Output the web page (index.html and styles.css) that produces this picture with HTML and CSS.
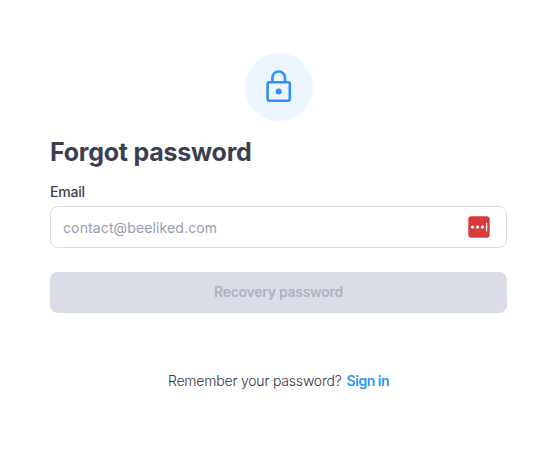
FILE: index.html
```html
<!DOCTYPE html>
<html lang="en">
  <head>
    <title>Forgot password</title>
    <meta charset="utf-8"/>
    <meta name="viewport" content="width=device-width, initial-scale=1.0"/>
    <link rel="stylesheet" href="styles.css">
  </head>
  <body>
    <main class="recovery">
      <div class="lock-badge">
        <svg width="68" height="68" viewBox="0 0 68 68" fill="none">
          <rect x="22.6" y="29.2" width="22.2" height="18.6" rx="2" stroke="#2b93f8" stroke-width="2.6"/>
          <path d="M27.4 29v-4.2a6.3 6.3 0 0 1 12.6 0V29" stroke="#2b93f8" stroke-width="2.6"/>
          <circle cx="33.7" cy="38.5" r="3" fill="#2b93f8"/>
        </svg>
      </div>
      <h1 class="title">Forgot password</h1>
      <form class="form">
        <label class="label" for="email">Email</label>
        <div class="field">
          <input class="input" id="email" type="email" placeholder="contact@beeliked.com"/>
          <svg class="manager-icon" width="22" height="22" viewBox="0 0 22 22">
            <rect x=".3" y=".3" width="21.4" height="21.4" rx="3" fill="#d73c3b"/>
            <circle cx="4.4" cy="11" r="1.6" fill="#fff"/>
            <circle cx="9.5" cy="11" r="1.6" fill="#fff"/>
            <circle cx="14.5" cy="11" r="1.6" fill="#fff"/>
            <rect x="18" y="6.8" width="1.2" height="8.5" rx=".3" fill="#fff"/>
          </svg>
        </div>
        <button class="submit" type="submit" disabled>Recovery password</button>
      </form>
      <p class="signin"><span class="question">Remember your password?</span><a class="link" href="#">Sign in</a></p>
    </main>
  </body>
</html>
```

FILE: styles.css
```css
* {
  box-sizing: border-box;
}
body {
  background: #fff;
  color: #3a3f53;
  font-family: Inter, "Open Sans", sans-serif;
  margin: 0;
}
.recovery {
  display: flex;
  flex-direction: column;
  padding: 53px 52px 0 50px;
}
.lock-badge {
  align-self: center;
  background: #edf6ff;
  border-radius: 50%;
  height: 68px;
  width: 68px;
}
.lock-badge svg {
  display: block;
}
.title {
  font-size: 25px;
  font-weight: 700;
  letter-spacing: -0.24px;
  line-height: 32px;
  margin: 15px 0 0;
}
.form {
  display: flex;
  flex-direction: column;
  margin-top: 14px;
}
.label {
  font-size: 14px;
  font-weight: 500;
  letter-spacing: -0.2px;
  line-height: 20px;
}
.field {
  align-items: center;
  border: 1px solid #dadbe4;
  border-radius: 8px;
  display: flex;
  height: 42px;
  margin-top: 4px;
  padding: 0 16px 0 12px;
}
.input {
  background: transparent;
  border: 0;
  color: #3a3f53;
  flex: 1;
  font: inherit;
  font-size: 14px;
  height: 40px;
  letter-spacing: 0.12px;
  min-width: 0;
  outline: none;
  padding: 1px 0 0;
}
.input::placeholder {
  color: #939cb0;
  opacity: 1;
}
.submit {
  background: #dadde5;
  border: 0;
  border-radius: 8px;
  color: #acb3c4;
  font: inherit;
  font-size: 14px;
  font-weight: 600;
  height: 41px;
  letter-spacing: -0.28px;
  margin-top: 24px;
  padding: 0 0 2px;
}
.signin {
  display: flex;
  font-size: 14px;
  gap: 5px;
  justify-content: center;
  line-height: 20px;
  margin: 58px 0 0;
}
.question {
  color: #33343c;
  font-weight: 300;
  letter-spacing: -0.2px;
}
.link {
  color: #2b93f8;
  font-weight: 600;
  letter-spacing: -0.48px;
  text-decoration: none;
}
```
